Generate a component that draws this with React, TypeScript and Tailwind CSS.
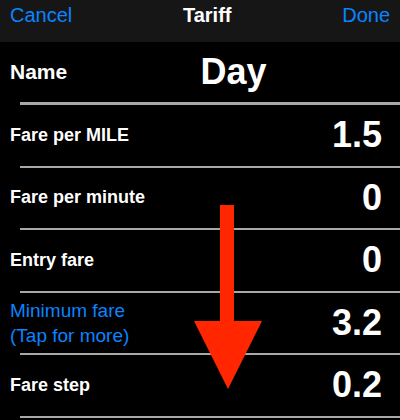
import React from 'react';

const rows = [
  { label: 'Fare per MILE', value: '1.5' },
  { label: 'Fare per minute', value: '0' },
  { label: 'Entry fare', value: '0' },
  { label: 'Minimum fare', sub: '(Tap for more)', value: '3.2', link: true },
  { label: 'Fare step', value: '0.2' },
];

export default function App() {
  return (
    <div
      className="relative w-[400px] h-[420px] bg-black text-white overflow-hidden"
      style={{ fontFamily: '"Liberation Sans", Arial, sans-serif' }}
    >
      {/* nav bar */}
      <header className="h-[42px] bg-[#161616] flex items-start justify-between px-[10px] pt-[3px] text-[20px] leading-[24px]">
        <span className="text-[#0a84ff]">Cancel</span>
        <span className="font-bold">Tariff</span>
        <span className="text-[#0a84ff]">Done</span>
      </header>

      {/* name row */}
      <div className="h-[60px] flex items-center pl-[10px]">
        <span className="text-[21px] font-bold">Name</span>
        <span className="flex-1 text-center text-[36px] font-bold">Day</span>
      </div>
      <div className="ml-[20px] h-[3px] bg-[#a8a8a8]" />

      {rows.map((row) => (
        <div key={row.label}>
          <div className="h-[60.5px] flex items-center justify-between pl-[10px] pr-[18px]">
            {row.link ? (
              <div className="text-[19px] leading-[25px] text-[#0a84ff]">
                <div>{row.label}</div>
                <div>{row.sub}</div>
              </div>
            ) : (
              <span className="text-[18px] font-bold">{row.label}</span>
            )}
            <span className="text-[36px] font-bold">{row.value}</span>
          </div>
          <div className="ml-[20px] h-[2px] bg-[#a8a8a8]" />
        </div>
      ))}

      {/* annotation arrow */}
      <svg className="absolute left-0 top-0 pointer-events-none" width="400" height="420" viewBox="0 0 400 420">
        <path d="M220 205 H234 V321 H262 L228 389 L194 321 H220 Z" fill="#ff2600" />
      </svg>
    </div>
  );
}
